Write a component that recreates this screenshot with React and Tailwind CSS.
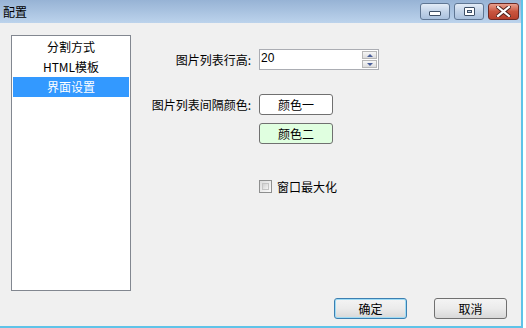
import React, { useState } from "react";

const font = { fontFamily: '"Noto Sans CJK SC", "Liberation Sans", sans-serif' };

function TitleButton({ kind }) {
	const close = kind === "close";
	return (
		<div
			className={`h-[17px] flex items-center justify-center rounded-[3px] border ${
				close
					? "w-[31px] border-[#6d2a25] bg-gradient-to-b from-[#e8a08f] via-[#c9553f] to-[#b8402c]"
					: "w-[30px] border-[#5f7693] bg-gradient-to-b from-[#e3ecf7] via-[#c2d3e8] to-[#a9c0dd]"
			}`}
		>
			{kind === "min" && <div className="w-[12px] h-[5px] mt-[4px] bg-white border border-[#3d4f66] rounded-[1px]" />}
			{kind === "max" && (
				<div className="w-[11px] h-[9px] bg-white border border-[#3d4f66] rounded-[1px] flex items-center justify-center">
					<div className="w-[5px] h-[3px] border border-[#3d4f66] bg-[#c2d3e8]" />
				</div>
			)}
			{close && (
				<svg width="15" height="11" viewBox="0 0 15 11">
					<path d="M2 1 L13 10 M13 1 L2 10" stroke="#4a1f1a" strokeWidth="4" strokeLinecap="square" />
					<path d="M2 1 L13 10 M13 1 L2 10" stroke="#ffffff" strokeWidth="2.2" strokeLinecap="square" />
				</svg>
			)}
		</div>
	);
}

function WinButton({ children, className = "", bg = "bg-gradient-to-b from-[#f4f4f4] via-[#ebebeb] to-[#d8d8d8]" }) {
	return (
		<button
			className={`h-[21px] flex items-center justify-center rounded-[3px] border text-[12px] leading-none text-black ${bg} ${className}`}
		>
			{children}
		</button>
	);
}

export default function App() {
	const [items] = useState(["分割方式", "HTML模板", "界面设置"]);
	const selected = 2;

	return (
		<div className="w-[526px] h-[328px] bg-white overflow-hidden" style={font}>
			<div className="w-[523px] h-[328px] flex flex-col bg-[#f0f0f0] border-r-2 border-b-2 border-[#5fc3e8]">
				{/* title bar */}
				<div className="h-[23px] shrink-0 flex items-center bg-gradient-to-b from-[#97b3d5] to-[#bcd3ec] pl-[3px] pr-[2px]">
					<span className="text-[12px] text-black leading-none flex-1">配置</span>
					<div className="flex items-start gap-[4px] self-start mt-[3px]">
						<TitleButton kind="min" />
						<TitleButton kind="max" />
						<TitleButton kind="close" />
					</div>
				</div>

				{/* body */}
				<div className="flex pt-[12px] pl-[11px]">
					<div className="w-[120px] h-[256px] bg-white border border-[#828790] pt-[1px] px-[1px]">
						{items.map((item, index) => (
							<div
								key={index}
								className={`h-[20px] flex items-center justify-center text-[12px] leading-none ${
									index === selected ? "bg-[#3399ff] text-white" : "text-black"
								}`}
							>
								{item}
							</div>
						))}
					</div>

					<div className="pl-[9px] pt-[14px] grid grid-cols-[111px_auto] gap-x-[8px] items-center content-start">
						<span className="text-[12px] text-right text-black leading-none">图片列表行高:</span>
						<div className="w-[120px] h-[21px] bg-white border border-[#abadb3] flex items-start justify-between pr-[1px]">
							<span className="text-[12px] leading-none pt-[2px] pl-[1px]" style={{ fontFamily: '"Liberation Sans", sans-serif' }}>
								20
							</span>
							<div className="flex flex-col gap-[1px] mt-[1px]">
								<div className="w-[15px] h-[8px] border border-[#b7b7b7] bg-gradient-to-b from-[#f7f7f7] to-[#dcdcdc] flex items-center justify-center">
									<div className="w-0 h-0 border-l-[3px] border-r-[3px] border-b-[3px] border-l-transparent border-r-transparent border-b-[#4a5f9a]" />
								</div>
								<div className="w-[15px] h-[8px] border border-[#b7b7b7] bg-gradient-to-b from-[#f7f7f7] to-[#dcdcdc] flex items-center justify-center">
									<div className="w-0 h-0 border-l-[3px] border-r-[3px] border-t-[3px] border-l-transparent border-r-transparent border-t-[#4a5f9a]" />
								</div>
							</div>
						</div>

						<span className="text-[12px] text-right text-black leading-none mt-[24px]">图片列表间隔颜色:</span>
						<WinButton className="w-[74px] mt-[24px] border-[#707070]" bg="bg-white">
							颜色一
						</WinButton>

						<span />
						<WinButton className="w-[74px] mt-[8px] border-[#707070]" bg="bg-[#e0ffe0]">
							颜色二
						</WinButton>

						<span />
						<label className="flex items-center gap-[5px] mt-[36px] text-[12px] leading-none text-black">
							<span className="w-[13px] h-[13px] border border-[#8e8f8f] bg-gradient-to-br from-[#dcdcdc] to-[#fbfbfb] p-[2px] flex">
								<span className="flex-1 border border-[#c4c4c4] bg-gradient-to-br from-[#d0d0d0] to-[#f4f4f4]" />
							</span>
							窗口最大化
						</label>
					</div>
				</div>

				{/* footer */}
				<div className="flex justify-end gap-[27px] pr-[14px] mt-[7px]">
					<WinButton className="w-[73px] border-[#3c7fb1] shadow-[inset_0_0_0_1px_#9fdcf5]">确定</WinButton>
					<WinButton className="w-[73px] border-[#707070]">取消</WinButton>
				</div>
			</div>
		</div>
	);
}
